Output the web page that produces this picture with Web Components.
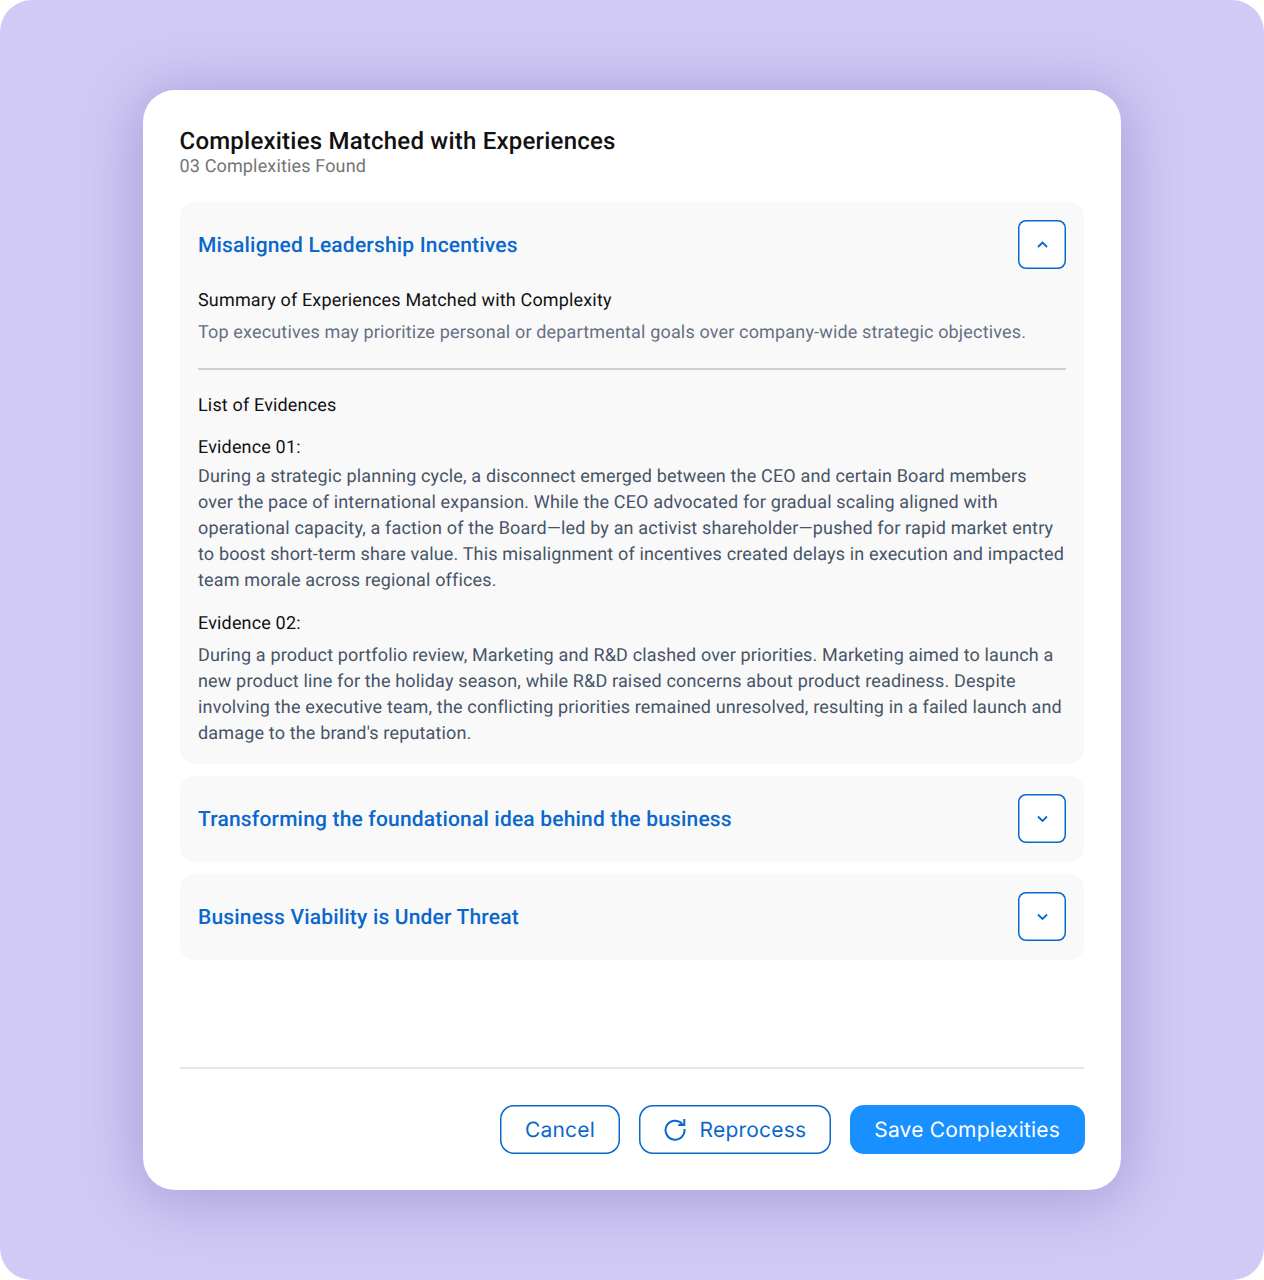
<!DOCTYPE html>
<html lang="en">
<head>
<meta charset="utf-8">
<title>Complexities</title>
<style>
  html, body { margin: 0; padding: 0; background: #fff; }
</style>
</head>
<body>
<modal-backdrop>
  <complexity-modal>
    <span slot="title">Complexities Matched with Experiences</span>
    <span slot="subtitle">03 Complexities Found</span>

    <complexity-item heading="Misaligned Leadership Incentives" open>
      <p class="label">Summary of Experiences Matched with Complexity</p>
      <evidence-text>Top executives may prioritize personal or departmental goals over company-wide strategic objectives.</evidence-text>
      <hr>
      <p class="label">List of Evidences</p>
      <evidence-block heading="Evidence 01:" gap="16" space="3">During a strategic planning cycle, a disconnect emerged between the CEO and certain Board members over the pace of international expansion. While the CEO advocated for gradual scaling aligned with operational capacity, a faction of the Board—led by an activist shareholder—pushed for rapid market entry to boost short-term share value. This misalignment of incentives created delays in execution and impacted team morale across regional offices.</evidence-block>
      <evidence-block heading="Evidence 02:" gap="17" space="6">During a product portfolio review, Marketing and R&amp;D clashed over priorities. Marketing aimed to launch a new product line for the holiday season, while R&amp;D raised concerns about product readiness. Despite involving the executive team, the conflicting priorities remained unresolved, resulting in a failed launch and damage to the brand's reputation.</evidence-block>
    </complexity-item>
    <complexity-item heading="Transforming the foundational idea behind the business"></complexity-item>
    <complexity-item heading="Business Viability is Under Threat"></complexity-item>

    <action-button slot="actions" variant="outline">Cancel</action-button>
    <action-button slot="actions" variant="outline" icon="refresh">Reprocess</action-button>
    <action-button slot="actions" variant="solid">Save Complexities</action-button>
  </complexity-modal>
</modal-backdrop>

<script>
  class ModalBackdrop extends HTMLElement {
    constructor() {
      super();
      this.attachShadow({ mode: "open" });
      this.shadowRoot.innerHTML = `
        <style>
          :host {
            display: flex;
            justify-content: center;
            box-sizing: border-box;
            width: 1264px;
            height: 1280px;
            padding-top: 90px;
            background: #d1caf5;
            border-radius: 32px;
          }
        </style>
        <slot></slot>
      `;
    }
  }

  class ComplexityModal extends HTMLElement {
    constructor() {
      super();
      this.attachShadow({ mode: "open" });
      this.shadowRoot.innerHTML = `
        <style>
          :host {
            display: flex;
            flex-direction: column;
            box-sizing: border-box;
            width: 978px;
            height: 1100px;
            padding: 36px 37px;
            background: #fff;
            border-radius: 32px;
            box-shadow: 0 6px 60px 8px rgba(120, 100, 180, 0.4);
            font-family: Roboto, "Liberation Sans", sans-serif;
            text-rendering: geometricPrecision;
          }
          .title {
            font-size: 24px;
            line-height: 30px;
            font-weight: 500;
            letter-spacing: 0.22px;
            color: #111;
            margin-left: -0.5px;
          }
          .subtitle {
            font-size: 18px;
            line-height: 21px;
            letter-spacing: 0.15px;
            color: #747474;
            margin-left: -0.5px;
          }
          .list {
            display: flex;
            flex-direction: column;
            gap: 12px;
            margin-top: 25px;
            flex: 1;
          }
          .actions {
            display: flex;
            justify-content: flex-end;
            align-items: center;
            gap: 18.5px;
            border-top: 2px solid #e6e6e6;
            padding-top: 36px;
          }
        </style>
        <div class="title"><slot name="title"></slot></div>
        <div class="subtitle"><slot name="subtitle"></slot></div>
        <div class="list"><slot></slot></div>
        <div class="actions"><slot name="actions"></slot></div>
      `;
    }
  }

  class ComplexityItem extends HTMLElement {
    constructor() {
      super();
      this.attachShadow({ mode: "open" });
      const open = this.hasAttribute("open");
      const heading = this.getAttribute("heading") || "";
      const chevron = open ? "M1 6 L5.5 1.5 L10 6" : "M1 1.5 L5.5 6 L10 1.5";
      this.shadowRoot.innerHTML = `
        <style>
          :host {
            display: block;
            box-sizing: border-box;
            padding: 18px;
            background: #f9f9f9;
            border-radius: 14px;
            letter-spacing: 0.16px;
          }
          .head {
            display: flex;
            justify-content: space-between;
            height: 50px;
            align-items: center;
          }
          h3 {
            margin: 0;
            padding-top: 2px;
            font-size: 21px;
            font-weight: 500;
            letter-spacing: 0.18px;
            color: #0a68cc;
          }
          .toggle {
            display: flex;
            align-items: center;
            justify-content: center;
            box-sizing: border-box;
            width: 48px;
            height: 48.5px;
            margin-top: -1px;
            background: #fff;
            border: 0;
            box-shadow: inset 0 0 0 1.5px #0a68cc;
            border-radius: 8px;
            padding: 0;
          }
          .body { margin-top: 18px; margin-bottom: -1px; }
          ::slotted(p.label) {
            margin: 0;
            font-size: 18px;
            line-height: 26px;
            color: #111;
          }
          ::slotted(hr) {
            margin: 22px 0 23px;
            border: 0;
            border-top: 2px solid #cfcfcf;
          }
        </style>
        <div class="head">
          <h3>${heading}</h3>
          <button class="toggle">
            <svg width="11" height="8" viewBox="0 0 11 8" fill="none" stroke="#0a68cc" stroke-width="1.8">
              <path d="${chevron}"/>
            </svg>
          </button>
        </div>
        ${open ? '<div class="body"><slot></slot></div>' : ""}
      `;
    }
  }

  class EvidenceText extends HTMLElement {
    constructor() {
      super();
      this.attachShadow({ mode: "open" });
      this.shadowRoot.innerHTML = `
        <style>
          :host {
            display: block;
            margin-top: 6px;
            font-size: 18px;
            line-height: 26px;
            color: #667085;
          }
        </style>
        <slot></slot>
      `;
    }
  }

  class EvidenceBlock extends HTMLElement {
    constructor() {
      super();
      this.attachShadow({ mode: "open" });
      const heading = this.getAttribute("heading") || "";
      const gap = this.getAttribute("gap") || "16";
      const space = this.getAttribute("space") || "3";
      this.shadowRoot.innerHTML = `
        <style>
          :host {
            display: block;
            margin-top: ${gap}px;
            font-size: 18px;
            line-height: 26px;
          }
          .name { color: #111; margin-bottom: ${space}px; }
          .copy { color: #475467; padding-right: 1px; }
        </style>
        <div class="name">${heading}</div>
        <div class="copy"><slot></slot></div>
      `;
    }
  }

  class ActionButton extends HTMLElement {
    constructor() {
      super();
      this.attachShadow({ mode: "open" });
      const solid = this.getAttribute("variant") === "solid";
      const icon = this.getAttribute("icon") === "refresh"
        ? `<svg width="24" height="24" viewBox="0 0 24 24" fill="none" stroke="#0a68cc" stroke-width="2">
             <path d="M18.3 6 A9.5 9.5 0 1 0 20.5 11"/>
             <path d="M14.3 7 H20.3 V1"/>
           </svg>`
        : "";
      this.shadowRoot.innerHTML = `
        <style>
          :host {
            display: inline-flex;
            align-items: center;
            justify-content: center;
            gap: 12px;
            box-sizing: border-box;
            height: 49px;
            border-radius: 14px;
            font-family: Inter, "Liberation Sans", sans-serif;
            font-size: 21px;
            letter-spacing: 0.2px;
            ${solid
              ? "padding: 1px 24.5px 0; background: #1890ff; color: #fff; margin-right: -0.5px;"
              : "padding: 1px 25px 0; background: #fff; color: #0a68cc; box-shadow: inset 0 0 0 1.5px #0a68cc;"}
          }
        </style>
        ${icon}<slot></slot>
      `;
    }
  }

  customElements.define("modal-backdrop", ModalBackdrop);
  customElements.define("complexity-modal", ComplexityModal);
  customElements.define("complexity-item", ComplexityItem);
  customElements.define("evidence-text", EvidenceText);
  customElements.define("evidence-block", EvidenceBlock);
  customElements.define("action-button", ActionButton);
</script>
</body>
</html>
